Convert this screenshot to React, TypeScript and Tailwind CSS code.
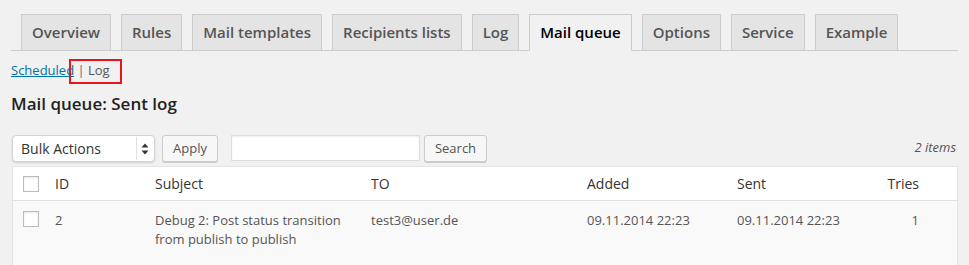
import React from "react";

const tabs = [
  "Overview",
  "Rules",
  "Mail templates",
  "Recipients lists",
  "Log",
  "Mail queue",
  "Options",
  "Service",
  "Example",
];

function Checkbox() {
  return (
    <div className="w-[16px] h-[16px] bg-white border border-[#bbb] shadow-[inset_0_1px_2px_rgba(0,0,0,0.1)]" />
  );
}

export default function App() {
  return (
    <div
      className="min-h-[265px] w-[969px] bg-[#f1f1f1] text-[#444] overflow-hidden"
      style={{ fontFamily: '"Open Sans", "Noto Sans", sans-serif' }}
    >
      <div className="mx-[11px]">
        {/* Tabs */}
        <div className="flex pt-[14px] border-b border-[#ccc]">
          {tabs.map((t) => {
            const active = t === "Mail queue";
            return (
              <div
                key={t}
                className={
                  "ml-[10px] h-[37px] mb-[-1px] px-[10px] border border-[#ccc] text-[15px] font-semibold leading-[35px] " +
                  (active
                    ? "bg-[#f1f1f1] text-black border-b-[#f1f1f1]"
                    : "bg-[#e4e4e4] text-[#555]")
                }
              >
                {t}
              </div>
            );
          })}
        </div>

        {/* Subsubsub */}
        <div className="relative mt-[9px] h-[20px] text-[13px] leading-[20px] text-[#666]">
          <span className="text-[#0074a2] underline">Scheduled</span>
          <span> | </span>
          <span className="text-[#555]">Log</span>
          <div className="absolute left-[58px] top-[-1px] w-[53px] h-[25px] border-2 border-[#e8151b]" />
        </div>

        {/* Heading */}
        <div className="mt-[12px] text-[17px] font-semibold leading-[24px] text-[#222]">
          Mail queue: Sent log
        </div>

        {/* Toolbar */}
        <div className="mt-[18px] flex items-center h-[28px] pl-[1px]">
          <div className="relative w-[143px] h-[27px] bg-white border border-[#d4d4d4] rounded-[4px] shadow-[0_1px_2px_rgba(0,0,0,0.15)] flex items-center">
            <span className="pl-[8px] text-[14px] text-[#333]">Bulk Actions</span>
            <div className="absolute right-[17px] top-[1px] bottom-[1px] w-px bg-[#e2e2e2]" />
            <svg
              className="absolute right-[5px] top-[7px]"
              width="8"
              height="12"
              viewBox="0 0 8 12"
            >
              <path d="M4 0.5 L7.5 4.5 H0.5 Z" fill="#333" />
              <path d="M4 11.5 L7.5 7.5 H0.5 Z" fill="#333" />
            </svg>
          </div>
          <div className="ml-[7px] h-[27px] px-[10px] bg-[#f7f7f7] border border-[#ccc] rounded-[3px] shadow-[0_1px_0_#ccc] text-[13px] leading-[25px] text-[#555] flex items-center">
            Apply
          </div>
          <div className="ml-[13px] w-[189px] h-[26px] bg-white border border-[#ddd] shadow-[inset_0_1px_2px_rgba(0,0,0,0.07)]" />
          <div className="ml-[4px] h-[27px] px-[10px] bg-[#f7f7f7] border border-[#ccc] rounded-[3px] shadow-[0_1px_0_#ccc] text-[13px] leading-[25px] text-[#555] flex items-center">
            Search
          </div>
          <div className="ml-auto mr-[2px] text-[13px] italic text-[#555]">2 items</div>
        </div>

        {/* Table */}
        <div className="mt-[4px] ml-[1px] w-[946px] bg-white border border-[#e5e5e5] shadow-[0_1px_1px_rgba(0,0,0,0.04)]">
          <div className="flex items-center h-[34px] border-b border-[#e1e1e1] text-[14px] text-[#333]">
            <div className="w-[32px] pl-[10px]">
              <Checkbox />
            </div>
            <div className="w-[100px] pl-[10px]">ID</div>
            <div className="w-[216px] pl-[10px]">Subject</div>
            <div className="w-[216px] pl-[10px]">TO</div>
            <div className="w-[150px] pl-[10px]">Added</div>
            <div className="w-[150px] pl-[10px]">Sent</div>
            <div className="w-[52px] pr-[10px] text-right">Tries</div>
          </div>
          <div className="flex items-start bg-[#f9f9f9] pt-[10px] pb-[20px] text-[13px] leading-[19px] text-[#555]">
            <div className="w-[32px] pl-[10px]">
              <Checkbox />
            </div>
            <div className="w-[100px] pl-[10px]">2</div>
            <div className="w-[216px] pl-[10px] pr-[10px]">
              Debug 2: Post status transition from publish to publish
            </div>
            <div className="w-[216px] pl-[10px]">test3@user.de</div>
            <div className="w-[150px] pl-[10px]">09.11.2014 22:23</div>
            <div className="w-[150px] pl-[10px]">09.11.2014 22:23</div>
            <div className="w-[52px] pr-[10px] text-right">1</div>
          </div>
        </div>
      </div>
    </div>
  );
}
